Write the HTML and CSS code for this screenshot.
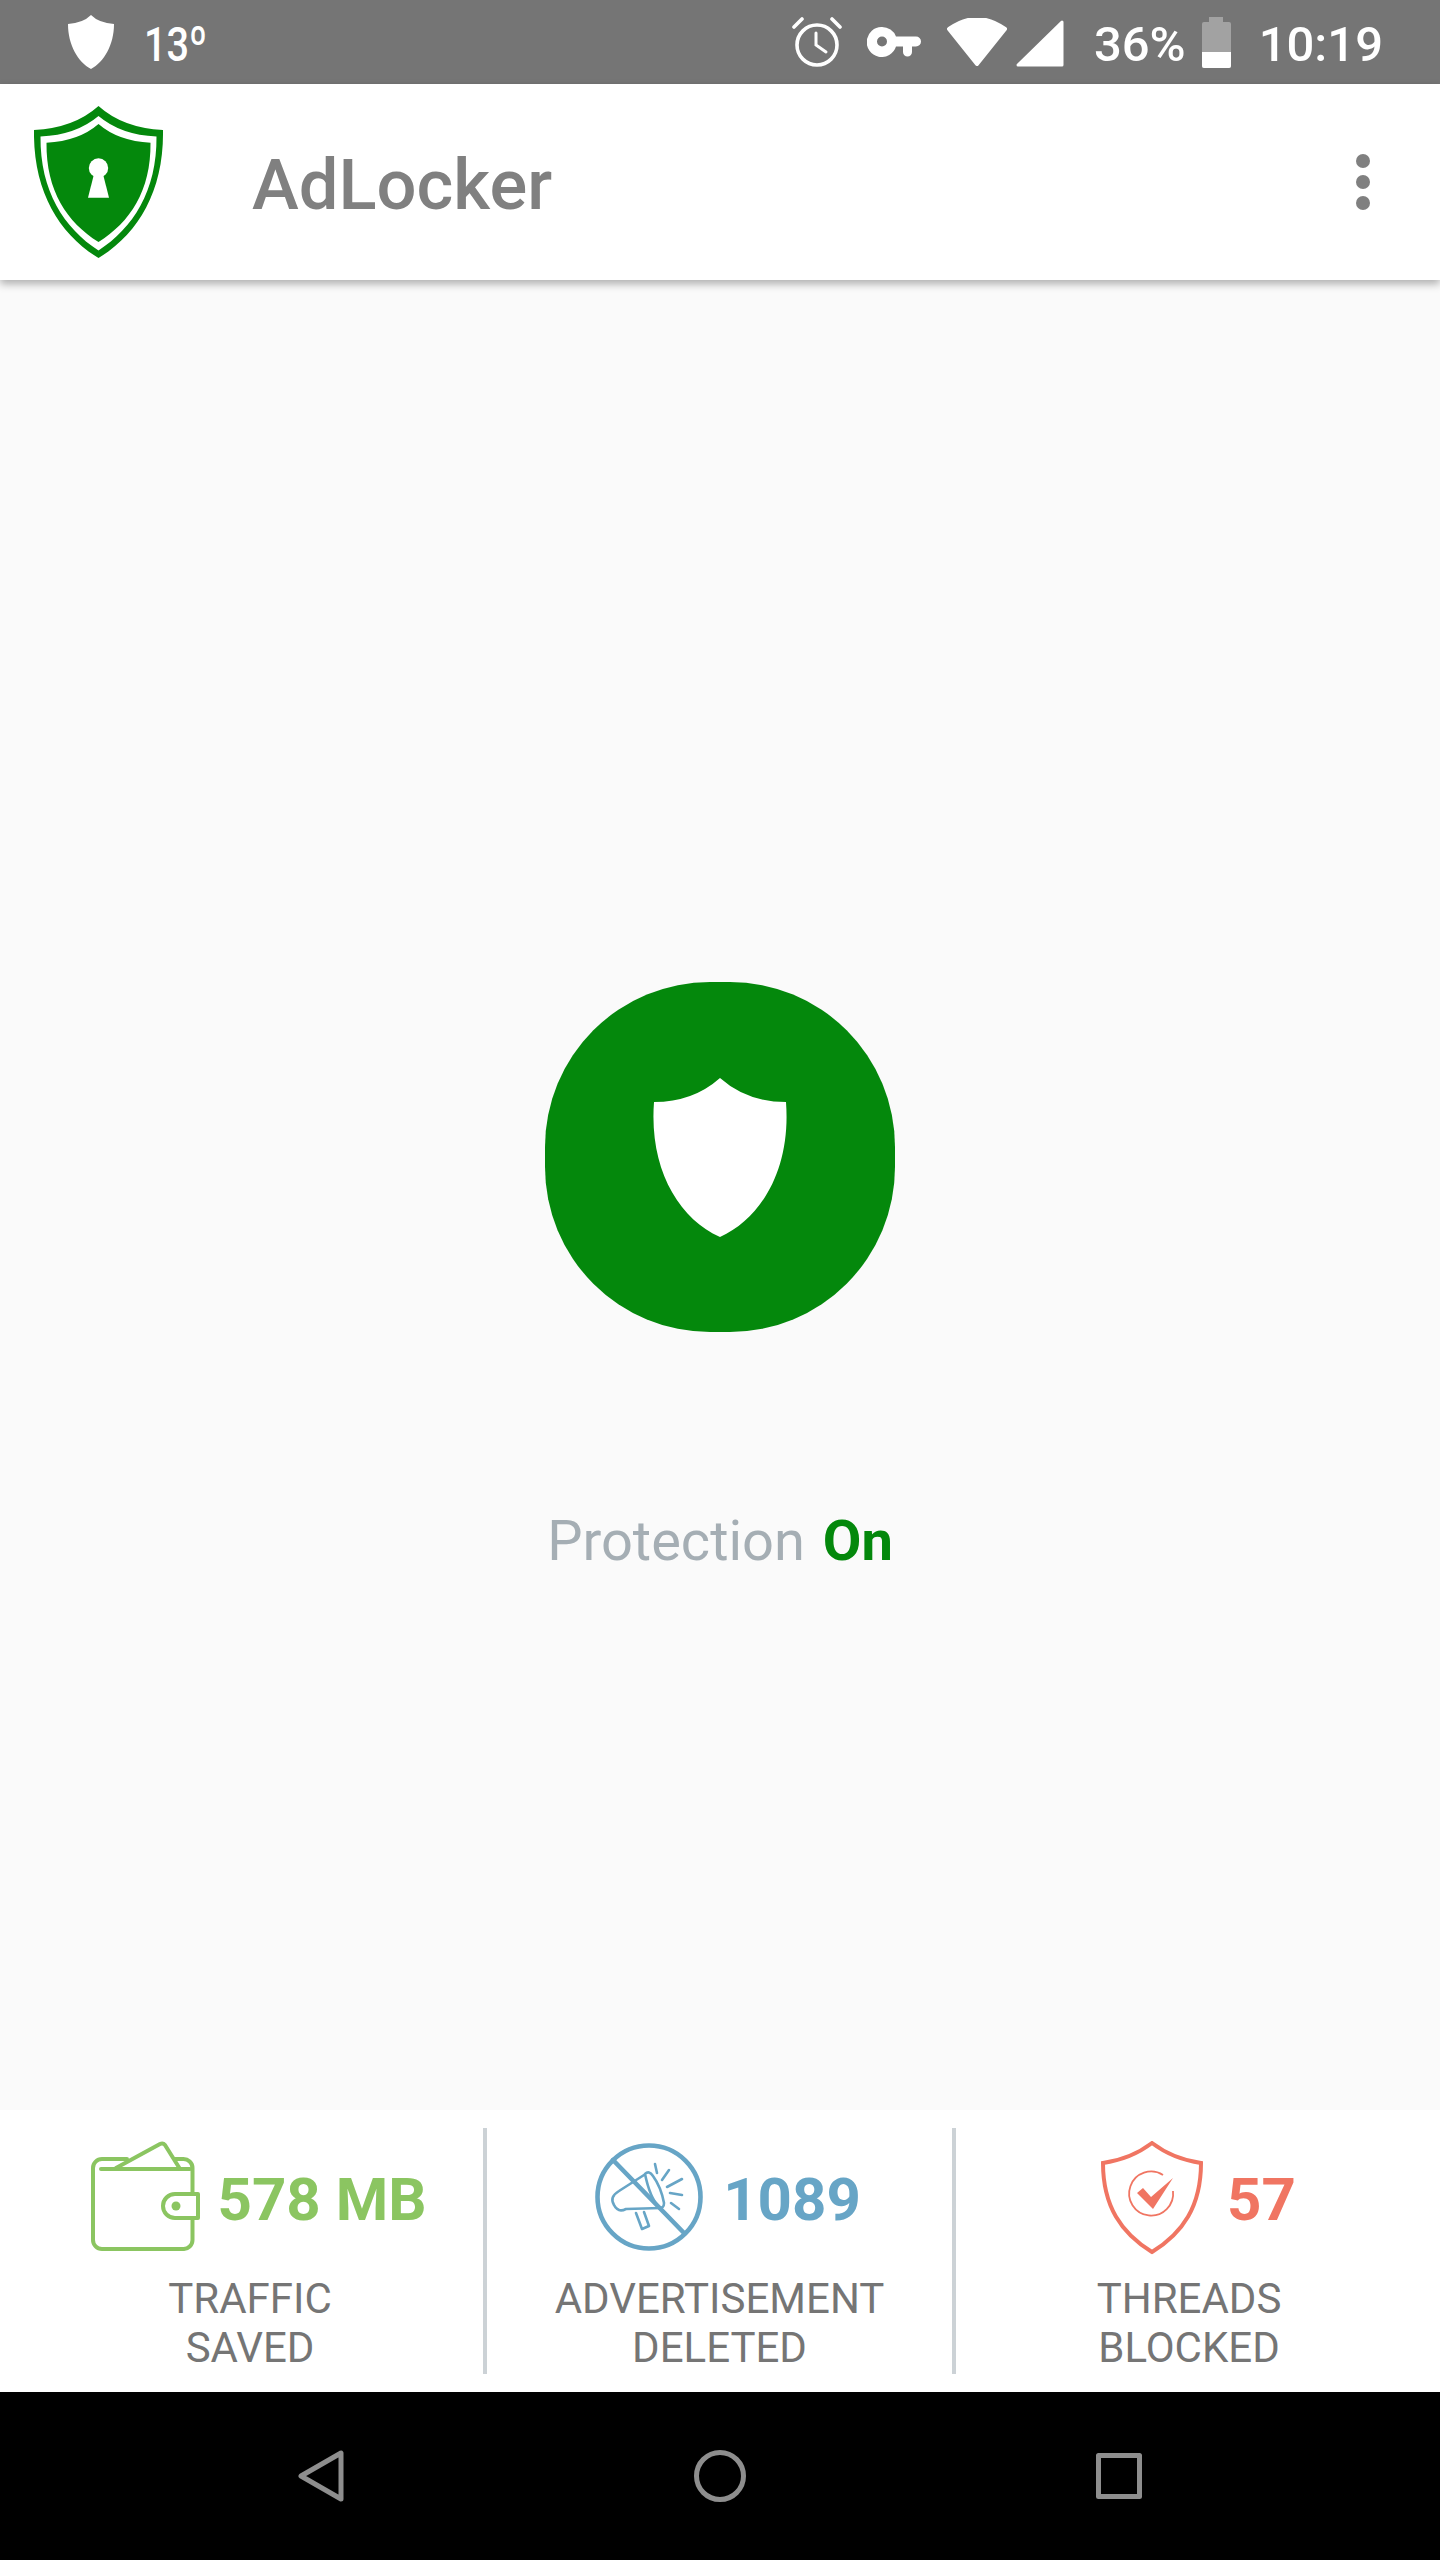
FILE: index.html
```html
<!DOCTYPE html>
<html lang="en">
<head>
  <meta charset="UTF-8" />
  <title>AdLocker</title>
  <link rel="stylesheet" href="styles.css">
</head>
<body>

<div class="status-bar">
  <div class="status-left">
    <svg class="status-shield" width="46" height="54" viewBox="0 0 46 54">
      <path fill="#fff" d="M23 0Q15 8 0 9C0 30 10 47 23 54C36 47 46 30 46 9Q31 8 23 0Z"/>
    </svg>
    <span class="status-temp">13º</span>
  </div>
  <div class="status-right">
    <svg class="icon-alarm" width="50" height="50" viewBox="0 0 50 50" fill="none" stroke="#fff" stroke-width="3.6" stroke-linecap="round">
      <circle cx="25" cy="28" r="20"/>
      <path d="M2 10L10 2M40 2L48 10"/>
      <path d="M24 16V28L34 35" stroke-width="3"/>
    </svg>
    <svg class="icon-key" width="54" height="30" viewBox="0 0 54 30">
      <path fill="#fff" fill-rule="evenodd" d="M15 0A15 15 0 0 1 29 9.500H49A5 5 0 0 1 49 19.500H45V25A4.500 4.500 0 0 1 36 25V19.500H29A15 15 0 1 1 15 0ZM15 9.500A5 5 0 1 0 15 19.500A5 5 0 1 0 15 9.500Z"/>
    </svg>
    <svg class="icon-wifi" width="60" height="48" viewBox="0 0 60 48">
      <path fill="#fff" stroke="#fff" stroke-width="4" stroke-linejoin="round" d="M2 11Q30 -9 58 11L30 46Z"/>
    </svg>
    <svg class="icon-signal" width="48" height="47" viewBox="0 0 48 47">
      <path fill="#fff" stroke="#fff" stroke-width="3" stroke-linejoin="round" d="M46 2V45H2Z"/>
    </svg>
    <span class="status-pct">36%</span>
    <div class="battery">
      <div class="battery-cap"></div>
      <div class="battery-body">
        <div class="battery-level"></div>
      </div>
    </div>
    <span class="status-time">10:19</span>
  </div>
</div>

<header class="toolbar">
  <svg class="logo" width="130" height="152" viewBox="0 0 130 152">
    <path fill="#04880c" d="M64.500 0Q40 22 0 24C-1 85 25 128 64.500 152C104 128 130 85 129 24Q89 22 64.500 0Z"/>
    <path fill="#fff" d="M64.500 10Q42 29 6.500 30.500C6 85 30 122 64.500 144.500C99 122 123 85 122.500 30.500Q87 29 64.500 10Z"/>
    <path fill="#04880c" d="M64.500 18Q45 35 12.500 36.700C12 85 33 116 64.500 136C96 116 117 85 116.500 36.700Q84 35 64.500 18Z"/>
    <circle cx="64.500" cy="62" r="9.700" fill="#fff"/>
    <path fill="#fff" d="M60 68H69L75 91.700H54Z"/>
  </svg>
  <h1 class="app-title">AdLocker</h1>
  <div class="more-menu">
    <span class="more-dot"></span>
    <span class="more-dot"></span>
    <span class="more-dot"></span>
  </div>
</header>

<main class="protect">
  <div class="protect-btn">
    <svg width="134" height="159" viewBox="0 0 134 159">
      <path fill="#fff" d="M67 0Q40 24 1 24C-4 90 25 140 67 159C109 140 138 90 133 24Q94 24 67 0Z"/>
    </svg>
  </div>
  <p class="protect-text">Protection <b class="protect-on">On</b></p>
</main>

<section class="stats">
  <div class="stat stat-traffic">
    <div class="stat-top">
      <svg width="109" height="110" viewBox="0 0 109 110" fill="none" stroke="#8bc561" stroke-width="4" stroke-linecap="round" stroke-linejoin="round">
        <path d="M36 18H11A9 9 0 0 0 2 27V99A9 9 0 0 0 11 108H92A9 9 0 0 0 101.500 99V27A9 9 0 0 0 92 18H84"/>
        <path d="M10 28H99"/>
        <path d="M25 27L69 3Q72 1.500 74 4L89 28"/>
        <path fill="#fff" d="M107 53H84A12 12 0 0 0 84 77H107Z"/>
        <circle cx="85" cy="65" r="4.500" fill="#8bc561" stroke="none"/>
      </svg>
      <span class="stat-num">578 MB</span>
    </div>
    <div class="stat-label">TRAFFIC<br>SAVED</div>
  </div>
  <div class="stat stat-ads">
    <div class="stat-top">
      <svg width="108" height="108" viewBox="0 0 108 108" fill="none" stroke="#67a5c6" stroke-linecap="round" stroke-linejoin="round">
        <circle cx="54" cy="54" r="51.500" stroke-width="4.600"/>
        <path d="M18 17L89 90" stroke-width="4.600"/>
        <g stroke-width="2.600">
          <path d="M49 32L24 48Q14 54 19 62Q23 70 31 66L66 65"/>
          <path d="M50 31Q54 27 58 33Q66 44 69 60Q69 66 64 64Q55 55 50 31Z"/>
          <path d="M41 70L47 86L54 83L49 69"/>
          <path d="M60 21L62 30M74 27L67 37M87 36L72 44M87 52L75 50M84 66L76 60"/>
        </g>
      </svg>
      <span class="stat-num">1089</span>
    </div>
    <div class="stat-label">ADVERTISEMENT<br>DELETED</div>
  </div>
  <div class="stat stat-threads">
    <div class="stat-top">
      <svg width="102" height="114" viewBox="0 0 102 114" fill="none" stroke="#f07562">
        <path stroke-width="4" d="M51 2Q30 18 2 22C2 65 20 92 51 111C82 92 100 65 100 22Q72 18 51 2Z"/>
        <path stroke-width="1.800" d="M62 34A22 22 0 1 0 72 50"/>
        <path fill="#f07562" stroke="none" d="M36 52L42 47L50 56L72 37L52 68Z"/>
      </svg>
      <span class="stat-num">57</span>
    </div>
    <div class="stat-label">THREADS<br>BLOCKED</div>
  </div>
</section>

<nav class="nav-bar">
  <svg width="46" height="52" viewBox="0 0 46 52" fill="none" stroke="#8e8e8e" stroke-width="5" stroke-linejoin="round">
    <path d="M43 3V49L3 26Z"/>
  </svg>
  <svg width="52" height="52" viewBox="0 0 52 52" fill="none" stroke="#8e8e8e" stroke-width="5">
    <circle cx="26" cy="26" r="23.500"/>
  </svg>
  <svg width="46" height="46" viewBox="0 0 46 46" fill="none" stroke="#8e8e8e" stroke-width="5" stroke-linejoin="round">
    <rect x="2.500" y="2.500" width="41" height="41"/>
  </svg>
</nav>

</body>
</html>
```

FILE: styles.css
```css
* {
  box-sizing: border-box;
}
body {
  margin: 0;
  width: 1440px;
  height: 2560px;
  display: flex;
  flex-direction: column;
  font-family: "Roboto", sans-serif;
  background: #fafafa;
  overflow: hidden;
}
svg {
  display: block;
  flex-shrink: 0;
}

/* status bar */
.status-bar {
  height: 84px;
  flex-shrink: 0;
  background: #757575;
  color: #fff;
  display: flex;
  justify-content: space-between;
  align-items: center;
  padding: 0 57px 0 68px;
  font-size: 49px;
  font-weight: 500;
}
.status-left {
  display: flex;
  align-items: center;
}
.status-temp {
  margin-left: 30px;
  margin-top: 4px;
  transform: scaleX(0.81);
  transform-origin: left center;
}
.status-right {
  display: flex;
  align-items: center;
}
.icon-key {
  margin-left: 25px;
}
.icon-wifi {
  margin-left: 26px;
}
.icon-signal {
  margin-left: 9px;
  margin-top: 3px;
}
.status-pct {
  margin-left: 30px;
  margin-top: 4px;
}
.battery {
  margin-left: 16px;
  width: 29px;
  display: flex;
  flex-direction: column;
  align-items: center;
}
.battery-cap {
  width: 14px;
  height: 5px;
  background: #a2a2a2;
}
.battery-body {
  width: 29px;
  height: 46px;
  border-radius: 2px;
  background: #a2a2a2;
  display: flex;
  align-items: flex-end;
}
.battery-level {
  width: 100%;
  height: 16px;
  background: #fff;
  border-radius: 0 0 2px 2px;
}
.status-time {
  margin-left: 28px;
  margin-top: 4px;
}

/* toolbar */
.toolbar {
  height: 196px;
  flex-shrink: 0;
  background: #fff;
  display: flex;
  align-items: center;
  padding: 0 70px 0 34px;
  box-shadow: 0 4px 8px rgba(0, 0, 0, 0.3);
  position: relative;
}
.app-title {
  margin: 6px 0 0 88px;
  flex-grow: 1;
  font-size: 70.5px;
  font-weight: 500;
  color: #808080;
}
.more-menu {
  display: flex;
  flex-direction: column;
  gap: 7px;
}
.more-dot {
  width: 14px;
  height: 14px;
  border-radius: 50%;
  background: #808080;
}

/* protection button */
.protect {
  flex-grow: 1;
  display: flex;
  flex-direction: column;
  align-items: center;
  padding-top: 702px;
}
.protect-btn {
  width: 350px;
  height: 350px;
  border-radius: 165px;
  background: #04880c;
  display: flex;
  align-items: center;
  justify-content: center;
}
.protect-text {
  margin: 176px 0 0;
  font-size: 56px;
  line-height: 66px;
  color: #a5aeb4;
}
.protect-on {
  margin-left: 4px;
  color: #04880c;
}

/* bottom counters */
.stats {
  height: 282px;
  flex-shrink: 0;
  background: #fff;
  padding: 18px 0;
  display: grid;
  grid-template-columns: 483px 473px 1fr;
}
.stat {
  padding-top: 13px;
  display: flex;
  flex-direction: column;
  align-items: center;
}
.stat-top {
  height: 110px;
  display: flex;
  align-items: center;
}
.stat-num {
  margin-top: 7px;
  margin-left: 17px;
  font-size: 60px;
  font-weight: 700;
}
.stat-label {
  margin-top: 23px;
  font-size: 42px;
  line-height: 49px;
  color: #757575;
  text-align: center;
}
.stat-traffic {
  padding-left: 17px;
}
.stat-traffic .stat-top {
  margin-left: 18px;
}
.stat-traffic .stat-num {
  color: #8bc561;
}
.stat-ads {
  border-left: 4px solid #ccd2d6;
  border-right: 4px solid #ccd2d6;
}
.stat-ads .stat-top {
  margin-left: 17px;
}
.stat-ads svg {
  margin-top: 2px;
}
.stat-ads .stat-num {
  margin-left: 20px;
  color: #67a5c6;
}
.stat-threads {
  padding-right: 18px;
}
.stat-threads .stat-top {
  margin-left: 19px;
}
.stat-threads svg {
  margin-top: 4px;
}
.stat-threads .stat-num {
  margin-left: 24px;
  color: #f07562;
}

/* android nav */
.nav-bar {
  height: 168px;
  flex-shrink: 0;
  background: #000;
  display: flex;
  align-items: center;
  justify-content: center;
  gap: 350px;
}
```
